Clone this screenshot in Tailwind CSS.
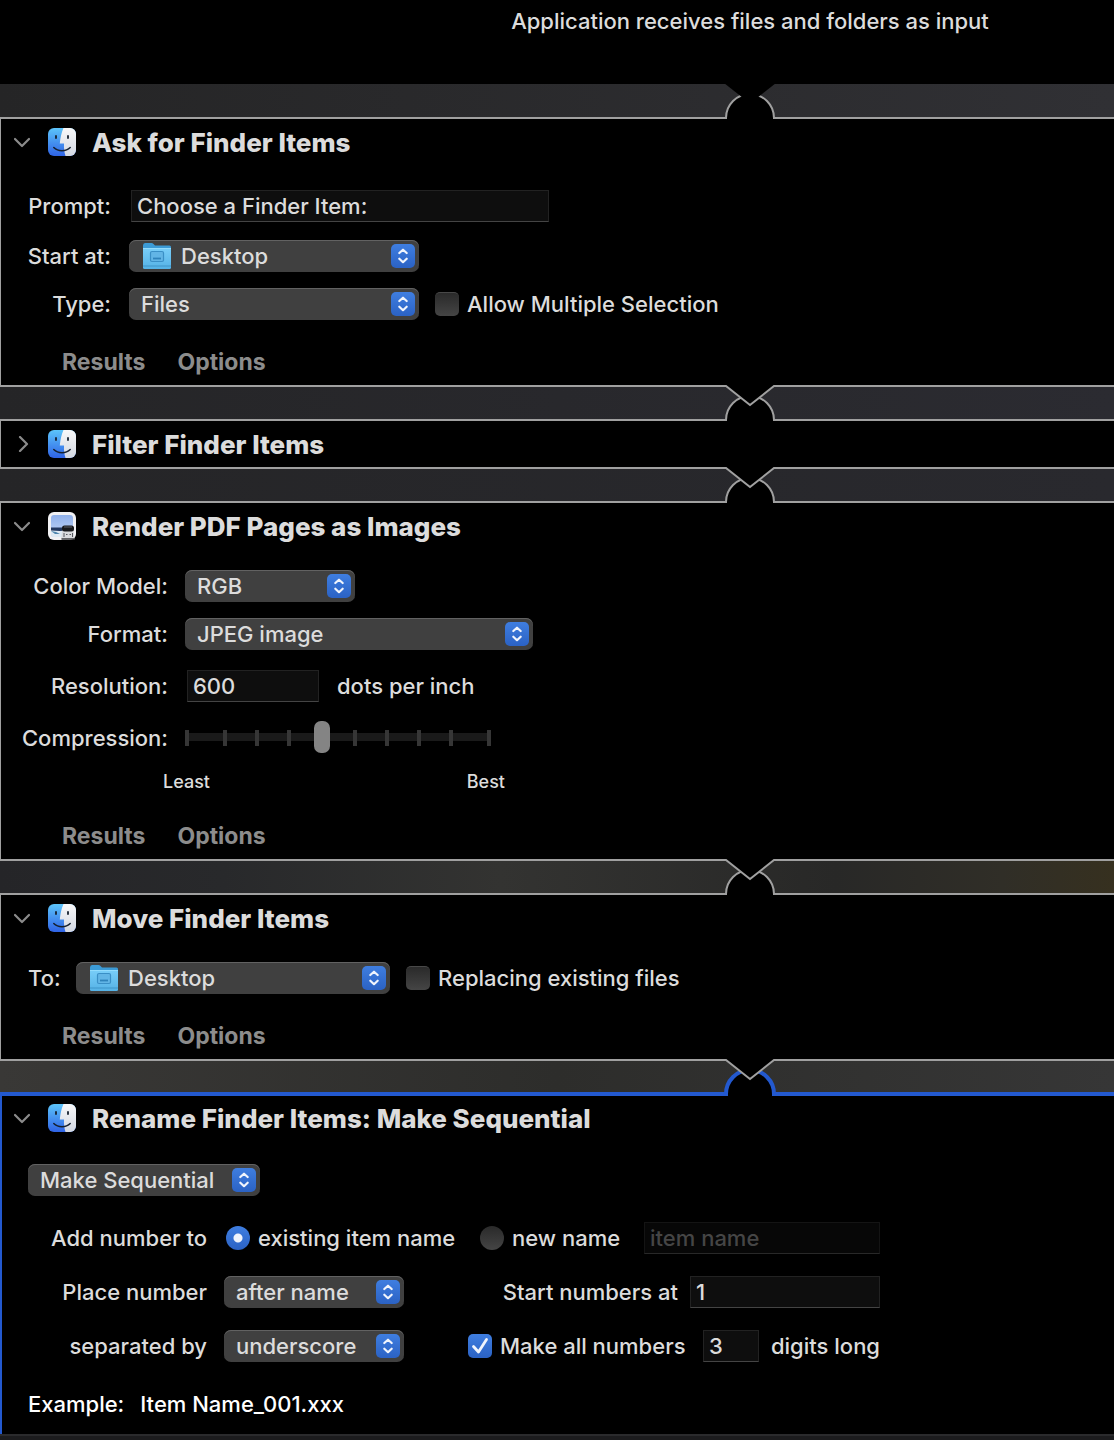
<!DOCTYPE html>
<html lang="en">
<head>
    <meta charset="UTF-8">
    <meta name="viewport" content="width=device-width, initial-scale=1.0">
    <title>Automator Workflow</title>
    <script src="https://cdn.jsdelivr.net/npm/@tailwindcss/browser@4"></script>
    <style>
        body { font-family: Inter, "Liberation Sans", sans-serif; }
    </style>
</head>
<body class="min-h-screen overflow-x-hidden bg-[#1c1c1e] text-[22px] leading-8 font-[450] text-[#dcdcdc]">

    <!-- Shared icons -->
    <svg class="absolute size-0" aria-hidden="true">
        <defs>
            <linearGradient id="finderBlue" x1="0" y1="0" x2="0" y2="1">
                <stop offset="0" stop-color="#5cc4fa"/>
                <stop offset="1" stop-color="#2f63e6"/>
            </linearGradient>
            <linearGradient id="finderWhite" x1="0" y1="0" x2="0" y2="1">
                <stop offset="0" stop-color="#f8f8f9"/>
                <stop offset="1" stop-color="#d3d8e2"/>
            </linearGradient>
            <linearGradient id="folderBlue" x1="0" y1="0" x2="0" y2="1">
                <stop offset="0" stop-color="#78cdf8"/>
                <stop offset="1" stop-color="#55b2e6"/>
            </linearGradient>
            <linearGradient id="sky" x1="0" y1="0" x2="0" y2="1">
                <stop offset="0" stop-color="#8fb0ea"/>
                <stop offset="1" stop-color="#c3d6f6"/>
            </linearGradient>
            <clipPath id="finderClip"><rect width="28" height="28" rx="6"/></clipPath>
        </defs>
        <symbol id="finder" viewBox="0 0 28 28">
            <g clip-path="url(#finderClip)">
                <rect width="28" height="28" fill="url(#finderBlue)"/>
                <path d="M15.500 0C13.500 4.500 12.300 9.500 11.800 15.500H16C15.800 20 16.200 24 17.500 28H28V0Z" fill="url(#finderWhite)"/>
            </g>
            <path d="M8 8V10M20 8V10" fill="none" stroke="#16202e" stroke-width="1.800" stroke-linecap="round"/>
            <path d="M5.800 19.500C10 23.800 18 23.800 22.200 19.500" fill="none" stroke="#16202e" stroke-width="1.500" stroke-linecap="round"/>
        </symbol>
        <symbol id="preview" viewBox="0 0 28 28">
            <rect width="28" height="28" rx="6" fill="#f1f1f3"/>
            <rect x="3" y="3" width="22" height="22" rx="3" fill="url(#sky)"/>
            <path d="M3 15.500H25V19H3Z" fill="#22375f"/>
            <path d="M3 18.500L12 19L25 18V22Q25 25 22 25H6Q3 25 3 22Z" fill="#dfeaf3"/>
            <path d="M3 19L8 20L12 22L7 22Z" fill="#4f86ae"/>
            <path d="M14.500 17.500L13 27H26.500L25.500 17.500Z" fill="#d9dadd"/>
            <path d="M16 21V25M18 22.500H19.500M21.500 22.500H23M24.500 21V25" fill="none" stroke="#55585e" stroke-width="1"/>
            <path d="M13.500 27H27" stroke="#3a3a3c" stroke-width="1.500"/>
            <rect x="14" y="13.500" width="12" height="6" rx="2.500" fill="#17181b"/>
            <path d="M16 15H24" stroke="#5c5f66" stroke-width="1"/>
        </symbol>
        <symbol id="folder" viewBox="0 0 30 28">
            <path d="M1 3.500Q1 1 3 1H9.500Q10.500 1 11.500 2L13 3.500H27.500Q29 3.500 29 5V10H1Z" fill="#3c9bd6"/>
            <path d="M1 6.500H29V25.500Q29 27 27.500 27H2.500Q1 27 1 25.500Z" fill="url(#folderBlue)"/>
            <path d="M1 6.500H29" stroke="#93dcfd" stroke-width="1"/>
            <path d="M1 24H29" stroke="#3f94c8" stroke-width="1"/>
            <rect x="8.500" y="9.500" width="13" height="10" rx="1.500" fill="#62b5e6" stroke="#3a8fc6" stroke-width="1.200"/>
            <path d="M11 16.500H19" stroke="#2f83bb" stroke-width="1.800"/>
        </symbol>
        <symbol id="down" viewBox="0 0 16 16">
            <path d="M1 5L8 12L15 5" fill="none" stroke="#8b8b8b" stroke-width="2.200" stroke-linecap="round" stroke-linejoin="round"/>
        </symbol>
        <symbol id="right" viewBox="0 0 16 16">
            <path d="M6 1L13 8L6 15" fill="none" stroke="#8b8b8b" stroke-width="2.200" stroke-linecap="round" stroke-linejoin="round"/>
        </symbol>
        <symbol id="updown" viewBox="0 0 24 24">
            <path d="M8.300 9L12 5.700L15.700 9M8.300 14.700L12 18.200L15.700 14.700" fill="none" stroke="#f0f4fc" stroke-width="2.200" stroke-linecap="round" stroke-linejoin="round"/>
        </symbol>
        <!-- notch between two actions -->
        <symbol id="joint" viewBox="0 0 52 36">
            <path d="M2 36V35A24 24 0 0 1 50 35V36Z" fill="#000"/>
            <path d="M2 36V35A24 24 0 0 1 50 35V36" fill="none" stroke="#a0a0a0" stroke-width="2"/>
            <path d="M2 0H50V1L26 20L2 1Z" fill="#000"/>
            <path d="M1 1H2L26 20L50 1H51" fill="none" stroke="#a0a0a0" stroke-width="2"/>
        </symbol>
    </svg>

    <header class="h-[84px] bg-black pt-[5px] pl-[386px] text-center">Application receives files and folders as input</header>

    <div class="relative z-10 flex h-[33px] justify-center bg-linear-to-r from-[#252526] to-[#303034] pl-[386px]">
        <svg class="-mt-px h-9 w-[52px] shrink-0" viewBox="0 0 52 36">
            <path d="M2 36V35A24 24 0 0 1 50 35V36Z" fill="#000"/>
            <path d="M2 36V35A24 24 0 0 1 50 35V36" fill="none" stroke="#a0a0a0" stroke-width="2"/>
            <path d="M0 0H52L26 20.500Z" fill="#000"/>
        </svg>
    </div>

    <!-- Ask for Finder Items -->
    <section class="border-y-2 border-l border-[#a0a0a0] bg-black">
        <div class="flex h-[46px] items-center pl-[13px]">
            <button aria-label="Collapse"><svg class="size-4"><use href="#down"/></svg></button>
            <svg class="ml-[18px] size-7"><use href="#finder"/></svg>
            <h2 class="ml-4 pt-0.5 text-[26px] font-extrabold">Ask for Finder Items</h2>
        </div>
        <div class="mt-[25px] grid grid-cols-[110px_1fr] gap-x-[18px]">
            <label for="prompt" class="text-right">Prompt:</label>
            <input id="prompt" type="text" value="Choose a Finder Item:" class="ml-0.5 h-8 w-[418px] border border-[#222] border-b-[#444] bg-[#0e0e0e] px-[5px]">
            <label for="start" class="mt-[18px] text-right">Start at:</label>
            <div class="relative mt-[18px] w-[290px]">
                <select id="start" class="block h-8 w-full appearance-none rounded-[7px] bg-[#404040] pr-8 pl-[52px] shadow-[inset_0_1px_0_#626262]"><option>Desktop</option></select>
                <svg class="pointer-events-none absolute top-0.5 left-[13px] h-7 w-[30px]"><use href="#folder"/></svg>
                <svg class="pointer-events-none absolute top-1 right-1 size-6 rounded-[5px] bg-linear-to-b from-[#3f7ee0] to-[#2b62c4]"><use href="#updown"/></svg>
            </div>
            <label for="type" class="mt-4 text-right">Type:</label>
            <div class="mt-4 flex items-center">
                <div class="relative w-[290px]">
                    <select id="type" class="block h-8 w-full appearance-none rounded-[7px] bg-[#404040] pr-8 pl-3 shadow-[inset_0_1px_0_#626262]"><option>Files</option></select>
                    <svg class="pointer-events-none absolute top-1 right-1 size-6 rounded-[5px] bg-linear-to-b from-[#3f7ee0] to-[#2b62c4]"><use href="#updown"/></svg>
                </div>
                <label class="ml-4 flex items-center gap-2">
                    <input type="checkbox" class="size-6 appearance-none rounded-[5px] border-t border-[#484848] bg-linear-to-b from-[#2a2a2a] to-[#454545]">
                    Allow Multiple Selection
                </label>
            </div>
        </div>
        <div class="mt-[19px] flex h-[46px] items-center gap-8 pl-[61px] text-[23px] font-bold text-[#8c8c8c]">
            <button>Results</button>
            <button>Options</button>
        </div>
    </section>

    <div class="relative z-10 flex h-8 justify-center bg-linear-to-r from-[#252527] to-[#2b2b31] pl-[386px]">
        <svg class="-mt-0.5 h-9 w-[52px] shrink-0"><use href="#joint"/></svg>
    </div>

    <!-- Filter Finder Items -->
    <section class="border-y-2 border-l border-[#a0a0a0] bg-black">
        <div class="flex h-[46px] items-center pl-[13px]">
            <button aria-label="Expand"><svg class="size-4"><use href="#right"/></svg></button>
            <svg class="ml-[18px] size-7"><use href="#finder"/></svg>
            <h2 class="ml-4 pt-0.5 text-[26px] font-extrabold">Filter Finder Items</h2>
        </div>
    </section>

    <div class="relative z-10 flex h-8 justify-center bg-linear-to-r from-[#252527] to-[#29292e] pl-[386px]">
        <svg class="-mt-0.5 h-9 w-[52px] shrink-0"><use href="#joint"/></svg>
    </div>

    <!-- Render PDF Pages as Images -->
    <section class="border-y-2 border-l border-[#a0a0a0] bg-black">
        <div class="flex h-[46px] items-center pl-[13px]">
            <button aria-label="Collapse"><svg class="size-4"><use href="#down"/></svg></button>
            <svg class="ml-[18px] size-7"><use href="#preview"/></svg>
            <h2 class="ml-4 pt-0.5 text-[26px] font-extrabold">Render PDF Pages as Images</h2>
        </div>
        <div class="mt-[21px] grid grid-cols-[167px_1fr] gap-x-[17px]">
            <label for="color" class="text-right">Color Model:</label>
            <div class="relative w-[170px]">
                <select id="color" class="block h-8 w-full appearance-none rounded-[7px] bg-[#404040] pr-8 pl-3 shadow-[inset_0_1px_0_#626262]"><option>RGB</option></select>
                <svg class="pointer-events-none absolute top-1 right-1 size-6 rounded-[5px] bg-linear-to-b from-[#3f7ee0] to-[#2b62c4]"><use href="#updown"/></svg>
            </div>
            <label for="format" class="mt-4 text-right">Format:</label>
            <div class="relative mt-4 w-[348px]">
                <select id="format" class="block h-8 w-full appearance-none rounded-[7px] bg-[#404040] pr-8 pl-3 shadow-[inset_0_1px_0_#626262]"><option>JPEG image</option></select>
                <svg class="pointer-events-none absolute top-1 right-1 size-6 rounded-[5px] bg-linear-to-b from-[#3f7ee0] to-[#2b62c4]"><use href="#updown"/></svg>
            </div>
            <label for="resolution" class="mt-5 text-right">Resolution:</label>
            <div class="mt-5 flex items-center pl-0.5">
                <input id="resolution" type="text" value="600" class="h-8 w-[132px] border border-[#222] border-b-[#444] bg-[#0e0e0e] px-[5px]">
                <span class="ml-[18px]">dots per inch</span>
            </div>
            <label for="compression" class="mt-5 text-right">Compression:</label>
            <div class="relative mt-[19px] h-8 w-[306px]">
                <svg class="absolute inset-0 h-8 w-full" viewBox="0 0 306 32">
                    <rect x="0" y="12" width="306" height="8" fill="#1a1a1a"/>
                    <path d="M2 9V25M40 9V25M72 9V25M104 9V25M170 9V25M202 9V25M234 9V25M266 9V25M304 9V25" stroke="#363636" stroke-width="4"/>
                </svg>
                <input id="compression" type="range" min="0" max="9" value="4" class="relative block h-8 w-full appearance-none bg-transparent [&::-webkit-slider-thumb]:h-8 [&::-webkit-slider-thumb]:w-4 [&::-webkit-slider-thumb]:appearance-none [&::-webkit-slider-thumb]:rounded-[7px] [&::-webkit-slider-thumb]:bg-[#848484]">
            </div>
        </div>
        <div class="mt-3 ml-[162px] flex h-8 w-[342px] justify-between text-lg leading-8">
            <span>Least</span>
            <span>Best</span>
        </div>
        <div class="mt-[15px] flex h-[46px] items-center gap-8 pl-[61px] text-[23px] font-bold text-[#8c8c8c]">
            <button>Results</button>
            <button>Options</button>
        </div>
    </section>

    <div class="relative z-10 flex h-8 justify-center bg-[linear-gradient(90deg,#252528,#28292b_20%,#333331_45%,#282827_75%,#302e27_90%,#36301f)] pl-[386px]">
        <svg class="-mt-0.5 h-9 w-[52px] shrink-0"><use href="#joint"/></svg>
    </div>

    <!-- Move Finder Items -->
    <section class="border-y-2 border-l border-[#a0a0a0] bg-black">
        <div class="flex h-[46px] items-center pl-[13px]">
            <button aria-label="Collapse"><svg class="size-4"><use href="#down"/></svg></button>
            <svg class="ml-[18px] size-7"><use href="#finder"/></svg>
            <h2 class="ml-4 pt-0.5 text-[26px] font-extrabold">Move Finder Items</h2>
        </div>
        <div class="mt-[21px] flex items-center pl-[27px]">
            <label for="to" class="w-12">To:</label>
            <div class="relative w-[314px]">
                <select id="to" class="block h-8 w-full appearance-none rounded-[7px] bg-[#404040] pr-8 pl-[52px] shadow-[inset_0_1px_0_#626262]"><option>Desktop</option></select>
                <svg class="pointer-events-none absolute top-0.5 left-[13px] h-7 w-[30px]"><use href="#folder"/></svg>
                <svg class="pointer-events-none absolute top-1 right-1 size-6 rounded-[5px] bg-linear-to-b from-[#3f7ee0] to-[#2b62c4]"><use href="#updown"/></svg>
            </div>
            <label class="ml-4 flex items-center gap-2">
                <input type="checkbox" class="size-6 appearance-none rounded-[5px] border-t border-[#484848] bg-linear-to-b from-[#2a2a2a] to-[#454545]">
                Replacing existing files
            </label>
        </div>
        <div class="mt-[19px] flex h-[46px] items-center gap-8 pl-[61px] text-[23px] font-bold text-[#8c8c8c]">
            <button>Results</button>
            <button>Options</button>
        </div>
    </section>

    <div class="relative z-10 flex h-[31px] justify-center bg-linear-to-r from-[#393836] via-[#2d2d2b] to-[#363636] pl-[386px]">
        <svg class="-mt-0.5 h-[37px] w-[52px] shrink-0" viewBox="0 0 52 37">
            <path d="M2 37V35A24 24 0 0 1 50 35V37Z" fill="#000"/>
            <path d="M2 37V35A24 24 0 0 1 50 35V37" fill="none" stroke="#2359cf" stroke-width="4"/>
            <path d="M2 0H50V1L26 20L2 1Z" fill="#000"/>
            <path d="M1 1H2L26 20L50 1H51" fill="none" stroke="#a0a0a0" stroke-width="2"/>
        </svg>
    </div>

    <!-- Rename Finder Items (selected) -->
    <section class="border-t-4 border-l-2 border-[#2359cf] bg-black">
        <div class="flex h-11 items-center pl-3">
            <button aria-label="Collapse"><svg class="size-4"><use href="#down"/></svg></button>
            <svg class="ml-[18px] size-7"><use href="#finder"/></svg>
            <h2 class="ml-4 pt-0.5 text-[26px] font-extrabold">Rename Finder Items: Make Sequential</h2>
        </div>
        <div class="mt-6 ml-[26px] w-[852px]">
            <div class="relative w-[232px]">
                <select aria-label="Rename mode" class="block h-8 w-full appearance-none rounded-[7px] bg-[#404040] pr-8 pl-3 shadow-[inset_0_1px_0_#626262]"><option>Make Sequential</option></select>
                <svg class="pointer-events-none absolute top-1 right-1 size-6 rounded-[5px] bg-linear-to-b from-[#3f7ee0] to-[#2b62c4]"><use href="#updown"/></svg>
            </div>
            <div class="mt-[26px] flex">
                <div class="flex w-[452px] shrink-0 items-center">
                    <span class="w-[179px] text-right">Add number to</span>
                    <label class="ml-[19px] flex items-center gap-2">
                        <input type="radio" name="target" checked class="size-6 appearance-none rounded-full bg-[radial-gradient(circle,#f0f4fc_4px,transparent_5px),linear-gradient(#3f7ee0,#2b62c4)]">
                        existing item name
                    </label>
                </div>
                <div class="flex flex-1 items-center justify-between">
                    <label class="flex items-center gap-2">
                        <input type="radio" name="target" class="size-6 appearance-none rounded-full bg-linear-to-b from-[#2a2a2a] to-[#454545]">
                        new name
                    </label>
                    <input type="text" aria-label="Item name" placeholder="item name" disabled class="h-8 w-[236px] border border-[#141414] border-b-[#282828] bg-[#070707] px-[5px] placeholder:text-[#454545]">
                </div>
            </div>
            <div class="mt-[22px] flex">
                <div class="flex w-[452px] shrink-0 items-center">
                    <label for="place" class="w-[179px] text-right">Place number</label>
                    <div class="relative ml-[17px] w-[180px]">
                        <select id="place" class="block h-8 w-full appearance-none rounded-[7px] bg-[#404040] pr-8 pl-3 shadow-[inset_0_1px_0_#626262]"><option>after name</option></select>
                        <svg class="pointer-events-none absolute top-1 right-1 size-6 rounded-[5px] bg-linear-to-b from-[#3f7ee0] to-[#2b62c4]"><use href="#updown"/></svg>
                    </div>
                </div>
                <div class="flex flex-1 items-center justify-end gap-3">
                    <label for="first">Start numbers at</label>
                    <input id="first" type="text" value="1" class="h-8 w-[190px] border border-[#222] border-b-[#444] bg-[#0e0e0e] px-[5px]">
                </div>
            </div>
            <div class="mt-[22px] flex">
                <div class="flex w-[440px] shrink-0 items-center">
                    <label for="separator" class="w-[179px] text-right">separated by</label>
                    <div class="relative ml-[17px] w-[180px]">
                        <select id="separator" class="block h-8 w-full appearance-none rounded-[7px] bg-[#404040] pr-8 pl-3 shadow-[inset_0_1px_0_#626262]"><option>underscore</option></select>
                        <svg class="pointer-events-none absolute top-1 right-1 size-6 rounded-[5px] bg-linear-to-b from-[#3f7ee0] to-[#2b62c4]"><use href="#updown"/></svg>
                    </div>
                </div>
                <div class="flex flex-1 items-center justify-between">
                    <label class="relative flex items-center gap-2">
                        <input type="checkbox" checked class="size-6 appearance-none rounded-[5px] bg-linear-to-b from-[#3f7ee0] to-[#2b62c4]">
                        <svg class="pointer-events-none absolute left-0 size-6" viewBox="0 0 24 24"><path d="M5.500 12.500L10.500 18L18.500 5.500" fill="none" stroke="#f0f4fc" stroke-width="2.800" stroke-linecap="round" stroke-linejoin="round"/></svg>
                        Make all numbers
                    </label>
                    <div class="flex items-center gap-3">
                        <input id="digits" type="text" value="3" class="h-8 w-14 border border-[#222] border-b-[#444] bg-[#0e0e0e] px-[5px]">
                        <label for="digits">digits long</label>
                    </div>
                </div>
            </div>
            <div class="mt-[26px] flex gap-4 pb-3.5 text-white">
                <span>Example:</span>
                <span>Item Name_001.xxx</span>
            </div>
        </div>
    </section>
    <footer class="h-1.5 border-t-2 border-[#2b2b2d] bg-[#1c1c1e]"></footer>
</body>
</html>
